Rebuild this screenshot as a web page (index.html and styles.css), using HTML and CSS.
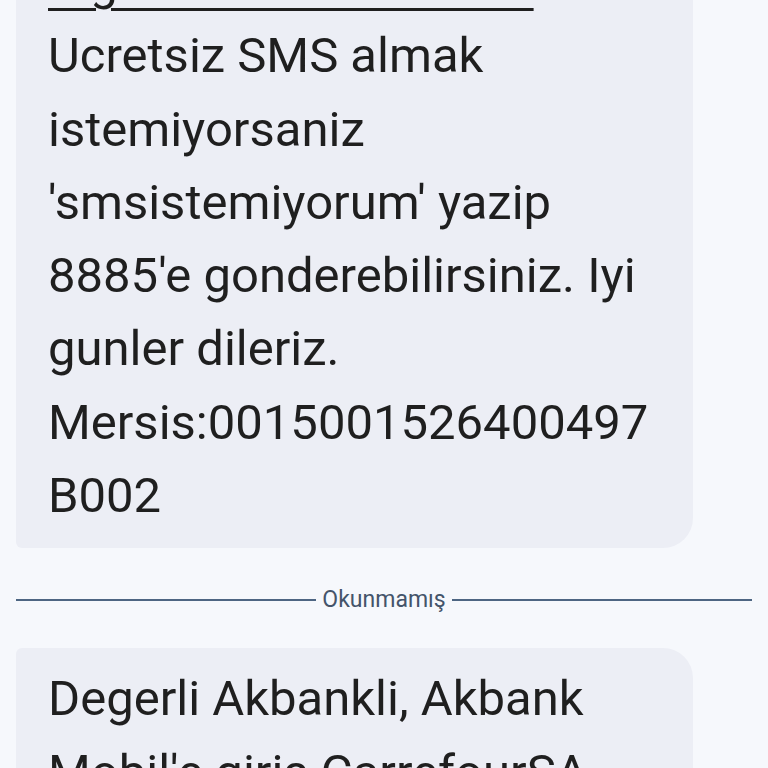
FILE: index.html
```html
<!DOCTYPE html>
<html lang="tr">
<head>
<meta charset="utf-8">
<title>Mesajlar</title>
<link rel="stylesheet" href="styles.css">
</head>
<body>
<main class="thread">
  <div class="bubble bubble-first">
    <p class="msg"><a class="link" href="#">regimcarrefoursa.com</a><br>Ucretsiz SMS almak<br>istemiyorsaniz<br>'smsistemiyorum' yazip<br>8885'e gonderebilirsiniz. Iyi<br>gunler dileriz.<br>Mersis:0015001526400497<br>B002</p>
  </div>
  <div class="divider">
    <span class="divider-line"></span>
    <span class="divider-label">Okunmamış</span>
    <span class="divider-line"></span>
  </div>
  <div class="bubble bubble-next">
    <p class="msg">Degerli Akbankli, Akbank<br>Mobil'e giris CarrefourSA<br>kampanyasi</p>
  </div>
</main>
</body>
</html>
```
FILE: styles.css
```css
html, body {
  margin: 0;
  padding: 0;
  background: #f6f8fc;
  height: 768px;
  overflow: hidden;
}
.thread {
  margin-top: -68px;
  padding: 0 16px;
  display: flex;
  flex-direction: column;
}
.bubble {
  background: #eceef5;
  width: 677px;
  box-sizing: border-box;
  padding: 14px 32px 16px 32px;
}
.bubble-first {
  border-radius: 6px 30px 30px 6px;
}
.bubble-next {
  border-radius: 6px 30px 30px 6px;
}
.msg {
  margin: 0;
  font-family: Roboto, "Noto Sans", sans-serif;
  font-size: 49px;
  line-height: 73.3px;
  color: #1f1f1f;
  white-space: nowrap;
}
.link {
  color: #1f1f1f;
  text-decoration: underline;
  text-decoration-thickness: 3px;
  text-underline-offset: 9px;
}
.divider {
  display: flex;
  align-items: center;
  gap: 6px;
  height: 20px;
  margin: 42px 0 38px;
}
.divider-line {
  flex: 1;
  height: 2px;
  background: #4d6582;
}
.divider-label {
  font-family: Roboto, "Noto Sans", sans-serif;
  font-size: 23px;
  color: #44546a;
  line-height: 20px;
}
```
